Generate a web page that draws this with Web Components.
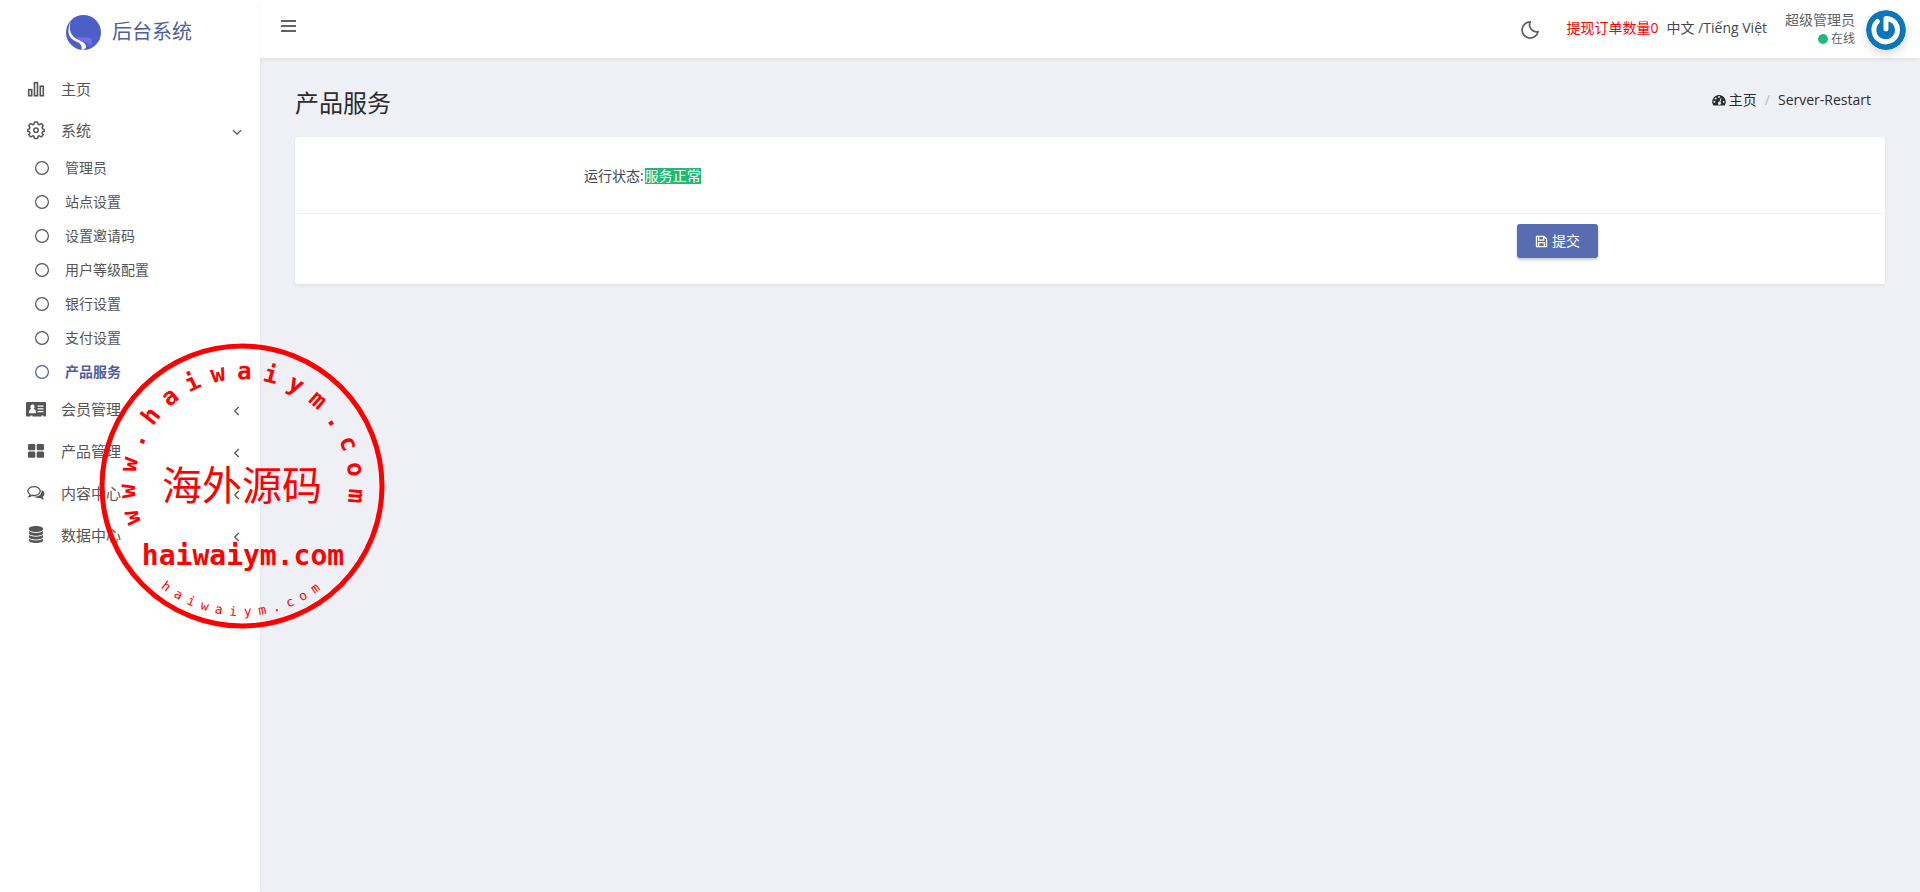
<!DOCTYPE html>
<html lang="zh-CN">
<head>
<meta charset="utf-8">
<meta name="viewport" content="width=device-width, initial-scale=1">
<title>产品服务</title>
<style>
  body {
    margin: 0;
    font: 14px/20px "Open Sans", "Noto Sans CJK SC", sans-serif;
    color: #414750;
    background: #eff0f6;
  }
</style>
</head>
<body>
<admin-layout>
  <side-brand slot="sidebar">后台系统</side-brand>
  <side-menu slot="sidebar">
    <menu-item icon="chart">主页</menu-item>
    <menu-item icon="gear" arrow="down">系统
      <sub-item slot="children">管理员</sub-item>
      <sub-item slot="children">站点设置</sub-item>
      <sub-item slot="children">设置邀请码</sub-item>
      <sub-item slot="children">用户等级配置</sub-item>
      <sub-item slot="children">银行设置</sub-item>
      <sub-item slot="children">支付设置</sub-item>
      <sub-item slot="children" active>产品服务</sub-item>
    </menu-item>
    <menu-item icon="idcard" arrow="left">会员管理</menu-item>
    <menu-item icon="grid" arrow="left">产品管理</menu-item>
    <menu-item icon="chat" arrow="left">内容中心</menu-item>
    <menu-item icon="database" arrow="left">数据中心</menu-item>
  </side-menu>

  <top-bar slot="header">
    <user-panel name="超级管理员" status="在线"></user-panel>
  </top-bar>

  <page-head heading="产品服务" current="Server-Restart"></page-head>
  <form-card>
    <status-field label="运行状态:">服务正常</status-field>
    <save-button slot="footer">提交</save-button>
  </form-card>
</admin-layout>
<round-stamp></round-stamp>

<script>
// base class: every element only has to supply its template
class BaseElement extends HTMLElement {
  constructor() {
    super();
    this.attachShadow({ mode: "open" });
  }

  connectedCallback() {
    const template = document.createElement("template");
    template.innerHTML = this.template();
    this.shadowRoot.replaceChildren(template.content.cloneNode(true));
  }

  attr(name) {
    return this.getAttribute(name) || "";
  }
}

// all icons sit on an 18 x 18 box
const ICONS = {
  chart: `<g fill="none" stroke="currentColor" stroke-width="1.6"><rect x="1.7" y="9.7" width="3" height="6"/><rect x="7.5" y="2.7" width="3" height="13"/><rect x="13.3" y="6.2" width="3" height="9.5"/></g>`,
  gear: `<g fill="none" stroke="currentColor" stroke-width="1.5" stroke-linejoin="round"><path d="M7.400 1.200Q9 .6 10.600 1.200L11.100 3.200 12.300 3.700 14.200 2.700Q15.600 3.500 16.200 4.900L15.100 6.700 15.600 7.900 17.200 8.400V10.200L15.600 10.800 15.100 12 16.200 13.800Q15.600 15.200 14.200 15.800L12.300 14.800 11.100 15.300 10.600 17.200Q9 17.700 7.400 17.200L6.900 15.300 5.700 14.800 3.800 15.800Q2.400 15.200 1.800 13.800L2.900 12 2.400 10.800.8 10.200V8.400L2.400 7.900 2.900 6.700 1.800 4.900Q2.400 3.500 3.800 2.700L5.700 3.700 6.900 3.200z"/><circle cx="9" cy="9.300" r="2.200"/></g>`,
  idcard: `<path fill="currentColor" fill-rule="evenodd" d="M0 2h18q1 0 1 1v12.500q0 1-1 1h-1.500v-1h-2v1h-9v-1h-2v1H0q-1 0-1-1V3q0-1 1-1zM5.300 4.600a2 2.200 0 0 0-1 4.100q-2.300.5-2.300 3.600v1h7v-1q0-3.100-2.400-3.600a2 2.200 0 0 0-1.300-4.100zM10.500 5.500v1.200h6V5.500zM10.500 8.300v1.200h6V8.300zM10.500 11.100v1.200h6v-1.200z"/>`,
  grid: `<g fill="currentColor"><rect x="1" y="2" width="7.300" height="6.300" rx="1.200"/><rect x="9.700" y="2" width="7.300" height="6.300" rx="1.200"/><rect x="1" y="9.500" width="7.300" height="6.300" rx="1.200"/><rect x="9.700" y="9.500" width="7.300" height="6.300" rx="1.200"/></g>`,
  chat: `<path fill="none" stroke="currentColor" stroke-width="1.300" d="M7 2.700c3.600 0 6.200 2 6.200 4.400s-2.600 4.400-6.200 4.400q-1 0-1.900-.2Q3.600 12.500 2 12.700q1-.9 1.200-2.200Q.8 9.200.8 7.100C.8 4.700 3.400 2.700 7 2.700z"/><path fill="currentColor" d="M14.600 6q2.900 1.300 2.900 3.800 0 1.900-1.800 3.200.3 1.400 1.500 2.500-2.300-.1-4-1.600-3.600.6-6.200-1.100 5.300 0 7-3.200.7-1.500.6-3.600z"/>`,
  database: `<path fill="currentColor" d="M9 0c4 0 7 1.100 7 2.500v1C16 4.900 13 6 9 6S2 4.900 2 3.500v-1C2 1.100 5 0 9 0zM2 5.300Q4.500 7.100 9 7.100t7-1.800v1.900c0 1.400-3 2.500-7 2.500S2 8.600 2 7.200zM2 9q2.500 1.800 7 1.800T16 9v1.900c0 1.400-3 2.500-7 2.500s-7-1.100-7-2.500zM2 12.700q2.500 1.800 7 1.800t7-1.800v1.800C16 15.900 13 17 9 17s-7-1.100-7-2.500z"/>`,
  ring: `<circle cx="9" cy="9" r="6.400" fill="none" stroke="currentColor" stroke-width="1.200"/>`,
  down: `<path d="M4.500 7l4.500 4.500L13.500 7" fill="none" stroke="currentColor" stroke-width="1.400"/>`,
  left: `<path d="M11 4.500L6.500 9l4.500 4.500" fill="none" stroke="currentColor" stroke-width="1.400"/>`,
  bars: `<path d="M2 4h15M2 9h15M2 14h15" fill="none" stroke="currentColor" stroke-width="2"/>`,
  moon: `<path d="M9.200.9A8.100 8.100 0 1 0 17.100 10.600 7 7 0 0 1 9.200.9z" fill="none" stroke="currentColor" stroke-width="1.800" stroke-linejoin="round"/>`,
  gauge: `<path fill="currentColor" fill-rule="evenodd" d="M9 2.500a8.700 8.700 0 0 0-7.400 13.200q.3.500.8.500h13.200q.5 0 .8-.5A8.700 8.700 0 0 0 9 2.500zM9 4a1.200 1.200 0 1 1 0 2.400A1.200 1.200 0 0 1 9 4zM4.700 5.800a1.200 1.200 0 1 1 0 2.400 1.200 1.200 0 0 1 0-2.400zM3 10a1.200 1.200 0 1 1 0 2.400A1.200 1.200 0 0 1 3 10zm12 0a1.200 1.200 0 1 1 0 2.400 1.200 1.200 0 0 1 0-2.400zM11 6.600l1.200.3-1.400 4.600a2 2 0 1 1-1.300-.4z"/>`,
  save: `<path fill="none" stroke="currentColor" stroke-width="1.800" d="M2 2h10.500L16 5.500V16H2zM5 2v5h7V2M5 16v-5.500h8V16"/>`,
};

class UiIcon extends BaseElement {
  template() {
    return `
      <style>
        :host { display: block; flex: none; width: 18px; height: 18px; }
        svg { display: block; width: 100%; height: 100%; overflow: visible; }
      </style>
      <svg viewBox="0 0 18 18" aria-hidden="true">${ICONS[this.attr("name")]}</svg>
    `;
  }
}

class AdminLayout extends BaseElement {
  template() {
    return `
      <style>
        :host {
          display: grid;
          grid-template-columns: 260px minmax(0, 1fr);
          min-height: 100vh;
        }
        aside {
          background: #fff;
          box-shadow: 0 0 4px rgba(0, 0, 0, .06);
        }
        main { padding: 30px 35px; }
      </style>
      <aside><slot name="sidebar"></slot></aside>
      <div>
        <slot name="header"></slot>
        <main><slot></slot></main>
      </div>
    `;
  }
}

class SideBrand extends BaseElement {
  template() {
    return `
      <style>
        :host { display: block; }
        a {
          display: flex;
          align-items: center;
          justify-content: center;
          gap: 11px;
          height: 64px;
          padding-right: 2px;
          font-size: 20px;
          line-height: 28px;
          color: #4c60a3;
          text-decoration: none;
        }
        svg { width: 35px; height: 35px; }
      </style>
      <a href="#">
        <svg viewBox="0 0 35 35" aria-hidden="true">
          <circle cx="17.500" cy="17.500" r="17.500" fill="#4c5fc4"/>
          <path fill="#7468f0" d="M9 21.500C13 24 24 19 26 25.500 26.500 28 25.500 30 24 31.500 23 26 13 27 9 21.500z"/>
          <path fill="#fff" d="M4.800 6C1 15 2 20.500 6 24 10 27.500 17 27 15.500 34.800 18 35 19.500 34 20 32 20.500 26 11 26 7 21 3 16.500 3.500 11 4.800 6z"/>
        </svg>
        <span><slot></slot></span>
      </a>
    `;
  }
}

class SideMenu extends BaseElement {
  template() {
    return `
      <style>
        :host { display: block; padding-top: 4px; }
      </style>
      <nav><slot></slot></nav>
    `;
  }
}

class MenuItem extends BaseElement {
  template() {
    const arrow = this.attr("arrow");
    return `
      <style>
        :host { display: block; color: #555; }
        a {
          display: flex;
          align-items: center;
          gap: 16px;
          height: 42px;
          padding: 0 15px 0 27px;
          font-size: 15px;
          color: inherit;
          text-decoration: none;
        }
        span { flex: 1; }
        .arrow {
          width: 16px;
          height: 16px;
          padding-top: 4px;
        }
        /* an open group sits a little tighter than the plain rows */
        :host([arrow="down"]) { margin: -1px 0; }
      </style>
      <a href="#">
        <ui-icon name="${this.attr("icon")}"></ui-icon>
        <span><slot></slot></span>
        ${arrow ? `<ui-icon class="arrow" name="${arrow}"></ui-icon>` : ""}
      </a>
      <slot name="children"></slot>
    `;
  }
}

class SubItem extends BaseElement {
  template() {
    return `
      <style>
        :host { display: block; }
        :host([active]) { color: #4c60a3; font-weight: 700; }
        a {
          display: flex;
          align-items: center;
          gap: 14px;
          height: 34px;
          padding-left: 33px;
          color: inherit;
          text-decoration: none;
        }
      </style>
      <a href="#"><ui-icon name="ring"></ui-icon><span><slot></slot></span></a>
    `;
  }
}

class TopBar extends BaseElement {
  template() {
    return `
      <style>
        :host {
          display: flex;
          align-items: center;
          height: 58px;
          padding: 0 14px 0 19px;
          background: #fff;
          box-shadow: 0 2px 4px rgba(0, 0, 0, .06);
        }
        button {
          padding: 0;
          border: 0;
          background: none;
          color: #626262;
          cursor: pointer;
        }
        .toggle { margin-right: auto; padding-bottom: 6px; }
        .night { padding-top: 2px; }
        a { color: inherit; text-decoration: none; }
        .links { display: flex; gap: 8px; padding: 0 18px 3px 28px; }
        .orders { color: #f00; }
      </style>
      <button class="toggle" type="button" aria-label="menu"><ui-icon name="bars"></ui-icon></button>
      <button class="night" type="button" aria-label="dark mode"><ui-icon name="moon"></ui-icon></button>
      <div class="links">
        <a class="orders" href="#">提现订单数量0</a>
        <span><a href="#">中文</a> /<a href="#">Tiếng Việt</a></span>
      </div>
      <slot></slot>
    `;
  }
}

class UserPanel extends BaseElement {
  template() {
    return `
      <style>
        :host { display: block; color: #626262; }
        a {
          display: flex;
          align-items: center;
          gap: 11px;
          color: inherit;
          text-decoration: none;
        }
        .name { display: block; }
        .status {
          display: flex;
          align-items: center;
          justify-content: flex-end;
          gap: 3px;
          font-size: 12px;
          line-height: 18px;
        }
        .status::before {
          content: "";
          width: 10px;
          height: 10px;
          border-radius: 50%;
          background: #21b978;
        }
        svg {
          width: 40px;
          height: 40px;
          margin-top: 2px;
          border-radius: 50%;
          box-shadow: 0 4px 8px rgba(0, 0, 0, .15);
        }
      </style>
      <a href="#">
        <span>
          <span class="name">${this.attr("name")}</span>
          <span class="status">${this.attr("status")}</span>
        </span>
        <svg viewBox="0 0 40 40" aria-hidden="true">
          <circle cx="20" cy="20" r="20" fill="#0b77ba"/>
          <g fill="none" stroke-linecap="round" stroke-linejoin="round">
            <path d="M20.500 20V9.500C27 9.500 32.500 14.500 32 21a12 12 0 1 1-20-9.500" stroke="#085f98" stroke-width="5"/>
            <path d="M20 19V8.500C26.500 8.500 31.500 13.500 31.500 20a11.800 11.800 0 1 1-20-8.500" stroke="#fff" stroke-width="5"/>
          </g>
        </svg>
      </a>
    `;
  }
}

class PageHead extends BaseElement {
  template() {
    return `
      <style>
        :host {
          display: flex;
          justify-content: space-between;
          align-items: flex-start;
          padding-bottom: 19px;
          color: #2c2c2c;
        }
        h1 {
          margin: 0;
          font-size: 24px;
          line-height: 30px;
          font-weight: 400;
        }
        nav {
          display: flex;
          align-items: center;
          gap: 8px;
          padding: 2px 14px 0 0;
        }
        a {
          display: flex;
          align-items: center;
          gap: 3px;
          color: inherit;
          text-decoration: none;
        }
        a ui-icon { width: 14px; height: 14px; }
        .sep { color: #b8b8c3; }
      </style>
      <h1>${this.attr("heading")}</h1>
      <nav>
        <a href="#"><ui-icon name="gauge"></ui-icon>主页</a>
        <span class="sep">/</span>
        <span>${this.attr("current")}</span>
      </nav>
    `;
  }
}

class FormCard extends BaseElement {
  template() {
    return `
      <style>
        :host { display: block; }
        form {
          background: #fff;
          border-radius: 4px;
          box-shadow: 0 2px 4px rgba(0, 0, 0, .06);
        }
        .row {
          display: grid;
          grid-template-columns: 2fr 8fr 2fr;
        }
        .row > div { grid-column: 2; padding: 0 22px 0 24px; }
        .body { padding: 29px 0 27px; }
        footer {
          padding: 10px 0 26px;
          border-top: 1px solid #f1f1f3;
        }
        footer > div { text-align: right; }
      </style>
      <form>
        <div class="row body"><div><slot></slot></div></div>
        <footer class="row"><div><slot name="footer"></slot></div></footer>
      </form>
    `;
  }
}

class StatusField extends BaseElement {
  template() {
    return `
      <style>
        :host { display: flex; align-items: center; gap: 1px; }
        output {
          line-height: 16px;
          color: #fff;
          background: #21b978;
        }
      </style>
      <label for="state">${this.attr("label")}</label>
      <output id="state"><slot></slot></output>
    `;
  }
}

class SaveButton extends BaseElement {
  template() {
    return `
      <style>
        :host { display: inline-flex; }
        button {
          display: flex;
          align-items: center;
          justify-content: center;
          gap: 4px;
          height: 34px;
          padding: 0 18px;
          border: 0;
          border-radius: 3px;
          font: inherit;
          color: #fff;
          background: #586cb1;
          box-shadow: 0 2px 3px rgba(0, 0, 0, .2);
          cursor: pointer;
        }
        ui-icon { width: 13px; height: 13px; }
      </style>
      <button type="button"><ui-icon name="save"></ui-icon><slot></slot></button>
    `;
  }
}

// Round seal that floats over the page
class RoundStamp extends BaseElement {
  // x, y and rotate lists that put each monospace glyph on a circle
  arc(text, size, radius, start, step, inside) {
    const advance = size * 0.6;
    const x = [], y = [], turn = [];
    for (let i = 0; i < text.length; i++) {
      const deg = start + i * step;
      const rad = deg * Math.PI / 180;
      const tilt = inside ? deg - 180 : deg;
      const t = tilt * Math.PI / 180;
      x.push((143 + radius * Math.sin(rad) - advance / 2 * Math.cos(t)).toFixed(1));
      y.push((143 - radius * Math.cos(rad) - advance / 2 * Math.sin(t)).toFixed(1));
      turn.push(tilt.toFixed(1));
    }
    return `<text font-size="${size}" x="${x.join(" ")}" y="${y.join(" ")}" rotate="${turn.join(" ")}">${text}</text>`;
  }

  template() {
    return `
      <style>
        :host {
          position: absolute;
          left: 99px;
          top: 343px;
          pointer-events: none;
        }
        svg {
          display: block;
          width: 286px;
          height: 286px;
          fill: #f00;
          font-family: "DejaVu Sans Mono", monospace;
        }
        .bold { font-weight: 700; }
        .name { font: 400 40px "Noto Sans CJK SC", sans-serif; }
      </style>
      <svg viewBox="0 0 286 286">
        <circle cx="143" cy="143" r="140" fill="none" stroke="#f00" stroke-width="5"/>
        <g class="bold">${this.arc("www.haiwaiym.com", 24, 107, -106, 13.4, false)}</g>
        <text class="name" x="143" y="157" text-anchor="middle">海外源码</text>
        <text class="bold" x="144" y="222" font-size="28" text-anchor="middle">haiwaiym.com</text>
        ${this.arc("haiwaiym.com", 13, 130, 217, -6.6, true)}
      </svg>
    `;
  }
}

customElements.define("ui-icon", UiIcon);
customElements.define("admin-layout", AdminLayout);
customElements.define("side-brand", SideBrand);
customElements.define("side-menu", SideMenu);
customElements.define("menu-item", MenuItem);
customElements.define("sub-item", SubItem);
customElements.define("top-bar", TopBar);
customElements.define("user-panel", UserPanel);
customElements.define("page-head", PageHead);
customElements.define("form-card", FormCard);
customElements.define("status-field", StatusField);
customElements.define("save-button", SaveButton);
customElements.define("round-stamp", RoundStamp);
</script>
</body>
</html>
